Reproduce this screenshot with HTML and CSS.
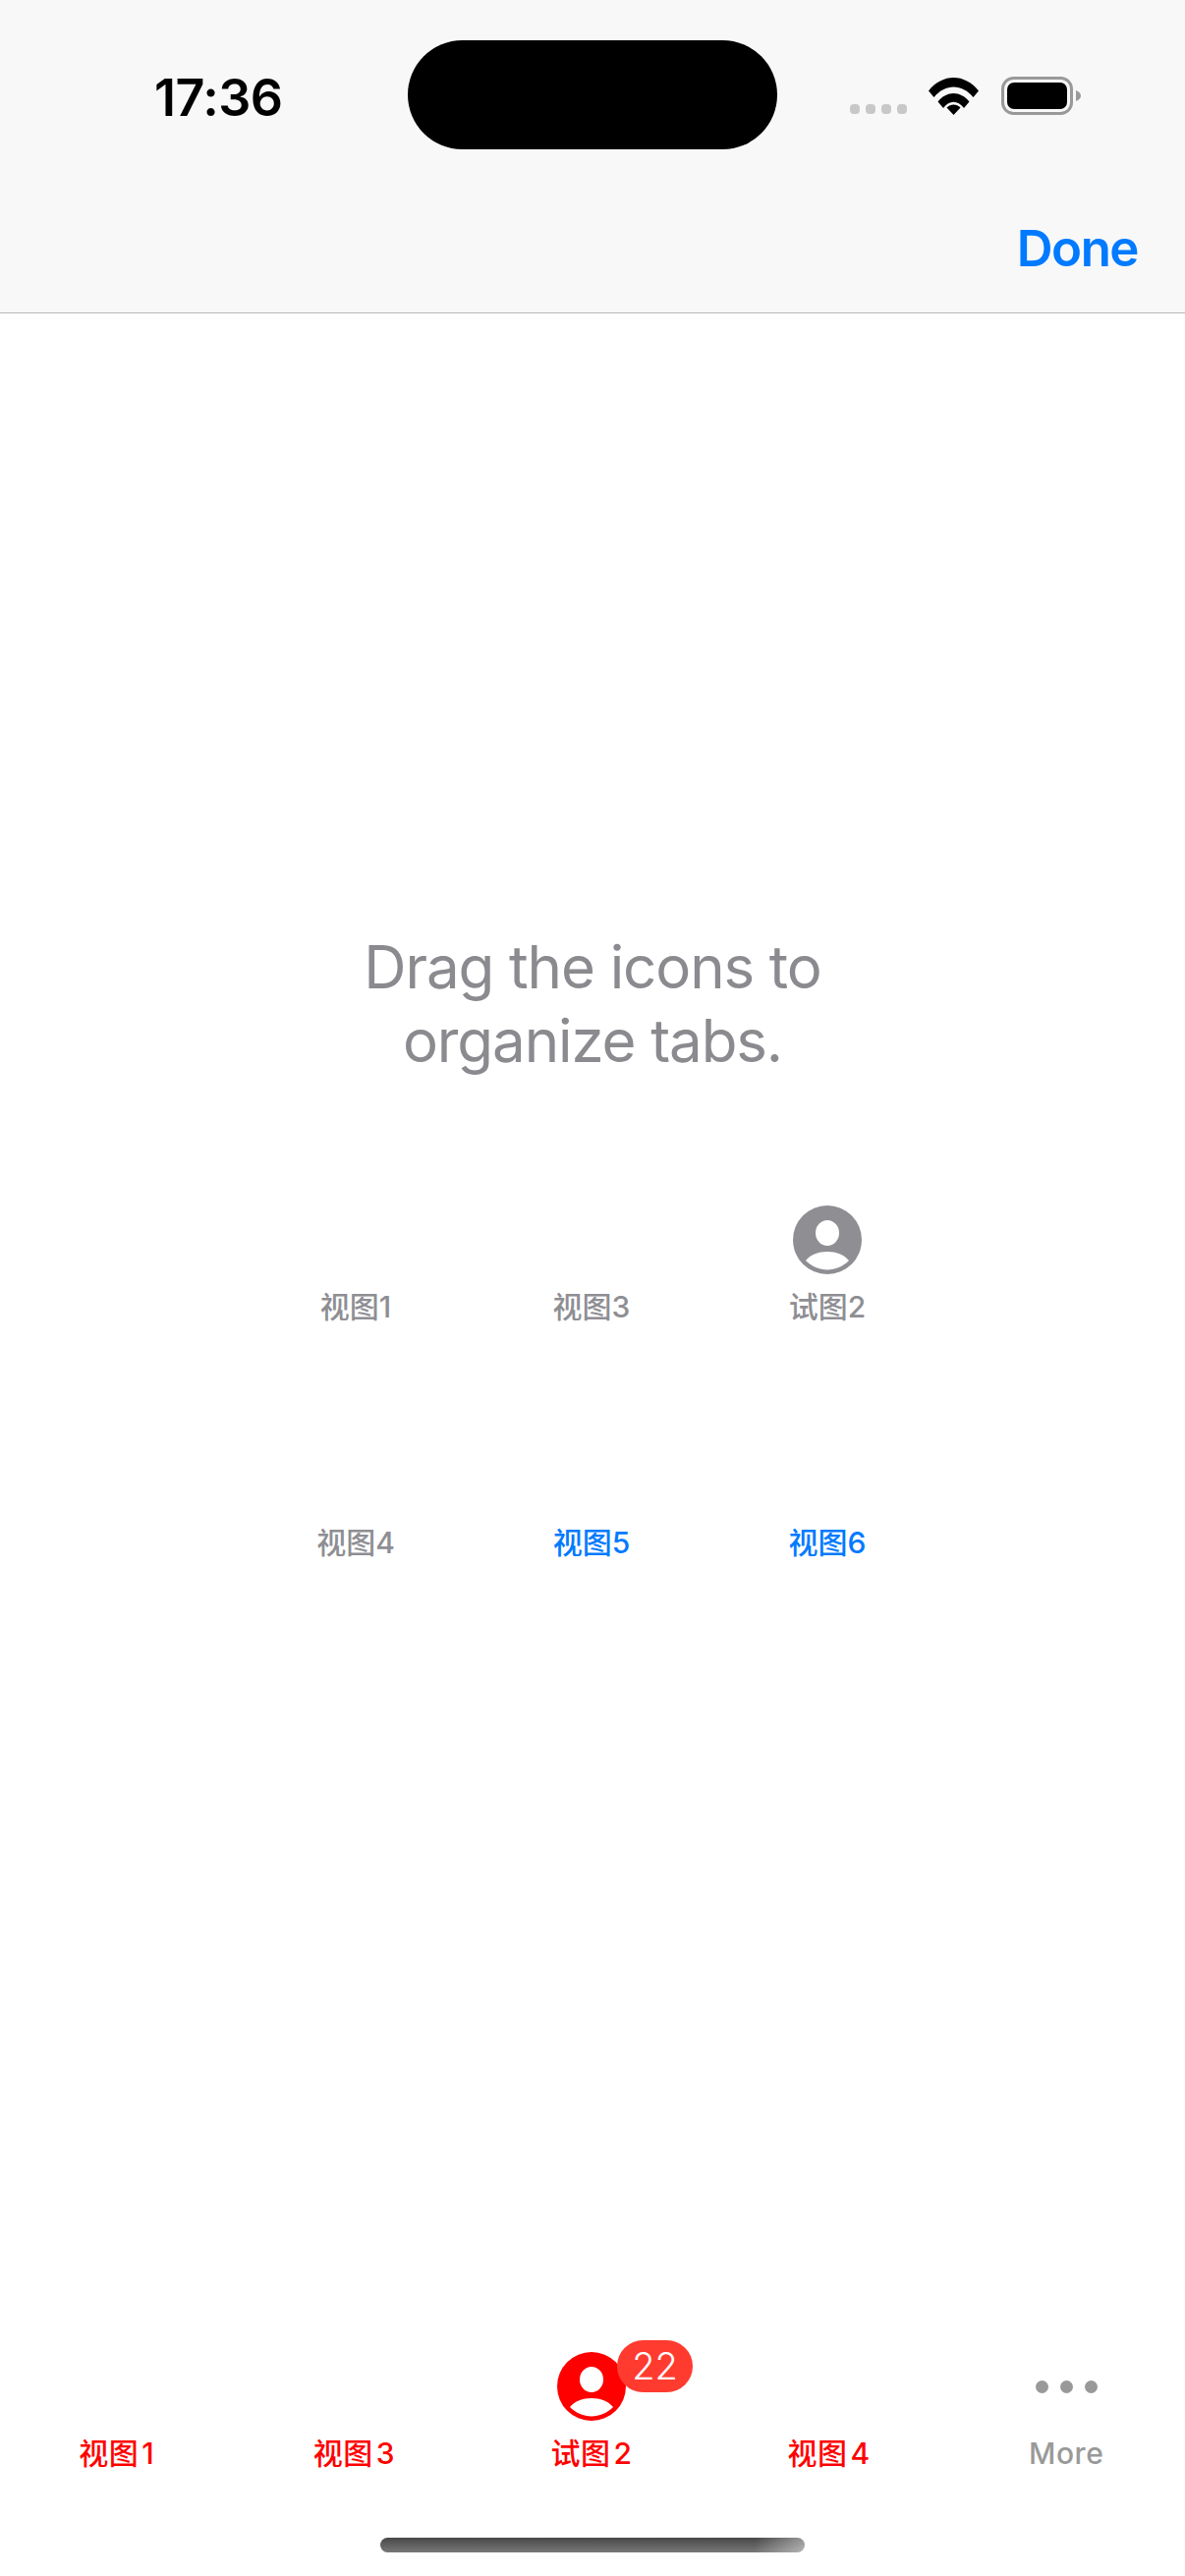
FILE: index.html
```html
<!DOCTYPE html>
<html lang="zh">
<head>
  <meta charset="UTF-8">
  <meta name="viewport" content="width=device-width, initial-scale=1.0">
  <title>Configure</title>
  <link rel="stylesheet" href="styles.css">
</head>
<body>
  <header class="top-bar">
    <div class="status-bar">
      <span class="time">17:36</span>
      <div class="island"></div>
      <div class="status-icons">
        <div class="signal"><i></i><i></i><i></i><i></i></div>
        <svg class="wifi" viewBox="0 0 51 38" fill="none">
          <path d="M0 13.5 C14 -4.5 37 -4.5 51 13.5 L45.5 20 C34 6 17 6 5.5 20 Z" fill="#000"/>
          <path d="M9.5 24.5 C18.5 13 32.5 13 41.5 24.5 L36 31 C29.5 22.5 21.5 22.5 15 31 Z" fill="#000"/>
          <path d="M18.5 30.5 C22.5 26.5 28.5 26.5 32.5 30.5 L25.5 38 Z" fill="#000"/>
        </svg>
        <svg class="battery" viewBox="0 0 81 39" fill="none">
          <rect x="1.5" y="1.5" width="70" height="36" rx="11" stroke="#999" stroke-width="3"/>
          <rect x="6" y="6" width="61" height="27" rx="7" fill="#000"/>
          <path d="M76 14 C79 15 81 17 81 19.5 C81 22 79 24 76 25 Z" fill="#999"/>
        </svg>
      </div>
    </div>
    <div class="nav-bar">
      <a class="done" href="#">Done</a>
    </div>
  </header>

  <main class="content">
    <h2 class="hint">Drag the icons to<br>organize tabs.</h2>
    <div class="tab-grid">
      <div class="grid-item"><span class="label">视图1</span></div>
      <div class="grid-item"><span class="label">视图3</span></div>
      <div class="grid-item">
        <svg class="avatar" viewBox="0 0 70 70">
          <use href="#person"></use>
        </svg>
        <span class="label">试图2</span>
      </div>
      <div class="grid-item"><span class="label">视图4</span></div>
      <div class="grid-item active"><span class="label">视图5</span></div>
      <div class="grid-item active"><span class="label">视图6</span></div>
    </div>
  </main>

  <nav class="tab-bar">
    <div class="tab"><span class="label">视图&#8202;1</span></div>
    <div class="tab"><span class="label">视图&#8202;3</span></div>
    <div class="tab">
      <div class="tab-icon">
        <svg class="avatar" viewBox="0 0 70 70">
          <use href="#person"></use>
        </svg>
        <span class="badge">22</span>
      </div>
      <span class="label">试图&#8202;2</span>
    </div>
    <div class="tab"><span class="label">视图&#8202;4</span></div>
    <div class="tab more">
      <div class="dots"><i></i><i></i><i></i></div>
      <span class="label">More</span>
    </div>
  </nav>
  <div class="home-area"><div class="home-indicator"></div></div>

  <svg class="defs" width="0" height="0">
    <defs>
      <g id="person">
        <path fill="currentColor" fill-rule="evenodd" d="M35 0a35 35 0 1 0 0 70a35 35 0 1 0 0-70Z M35 15a12 13 0 1 0 0 26a12 13 0 1 0 0-26Z M35 47C26 47 18 50 13 56C19 62 27 65.5 35 65.5S51 62 57 56C52 50 44 47 35 47Z"/>
      </g>
    </defs>
  </svg>
</body>
</html>
```

FILE: styles.css
```css
* {
  box-sizing: border-box;
}

body {
  margin: 0;
  height: 2622px;
  display: flex;
  flex-direction: column;
  background: #fff;
  font-family: Inter, "Noto Sans CJK SC", sans-serif;
  overflow: hidden;
}

.top-bar {
  height: 319px;
  background: #f8f8f8;
  border-bottom: 1px solid #b8b8b8;
}

.status-bar {
  height: 193px;
  padding-top: 41px;
  display: flex;
  align-items: flex-start;
}

.time {
  width: 415px;
  padding: 28px 0 0 157px;
  font-size: 52px;
  line-height: 62px;
  font-weight: 600;
  letter-spacing: -0.5px;
  color: #000;
}

.island {
  width: 376px;
  height: 111px;
  border-radius: 56px;
  background: #000;
}

.status-icons {
  display: flex;
  align-items: flex-end;
  padding: 37px 0 0 74px;
}

.signal {
  display: flex;
  gap: 6px;
  margin-right: 22px;
  margin-bottom: 1px;
}

.signal i {
  width: 10px;
  height: 10px;
  border-radius: 4px;
  background: #c8c8c8;
}

.wifi {
  width: 51px;
  height: 38px;
  margin-right: 23px;
}

.battery {
  width: 81px;
  height: 39px;
}

.nav-bar {
  display: flex;
  justify-content: flex-end;
  padding: 29px 48px 0 0;
}

.done {
  font-size: 51px;
  line-height: 62px;
  font-weight: 600;
  letter-spacing: -1.5px;
  color: #007aff;
  text-decoration: none;
}

.content {
  flex: 1;
  padding-top: 628px;
}

.hint {
  margin: 0;
  font-size: 60px;
  line-height: 75px;
  font-weight: 400;
  letter-spacing: -1.1px;
  text-align: center;
  color: #8a8a8f;
}

.tab-grid {
  width: 720px;
  margin-left: 242px;
  padding-top: 130px;
  display: grid;
  grid-template-columns: repeat(3, 240px);
  grid-auto-rows: 240px;
}

.grid-item {
  display: flex;
  flex-direction: column;
  align-items: center;
  padding-top: 70px;
  color: #8e8e93;
}

.grid-item:has(.avatar) {
  padding-top: 0;
}

.grid-item .avatar {
  width: 70px;
  height: 70px;
}

.grid-item .label {
  margin-top: 15px;
}

.grid-item.active {
  color: #007aff;
}

.label {
  font-size: 30px;
  line-height: 36px;
  font-weight: 500;
  white-space: nowrap;
}

.tab-bar {
  height: 143px;
  margin-left: -2px;
  display: grid;
  grid-template-columns: repeat(5, 1fr);
}

.tab {
  display: flex;
  flex-direction: column;
  align-items: center;
  justify-content: flex-end;
  color: #f00;
  padding-bottom: 4px;
}

.tab .label {
  letter-spacing: 0.5px;
}

.tab.more {
  color: #999;
}

.tab-icon {
  position: relative;
  width: 70px;
  height: 70px;
  margin-bottom: 15px;
}

.tab-icon .avatar {
  display: block;
  width: 70px;
  height: 70px;
}

.badge {
  position: absolute;
  top: -12px;
  left: 61px;
  min-width: 77px;
  height: 53px;
  border-radius: 27px;
  background: #ff3b30;
  color: #fff;
  font-size: 38px;
  line-height: 53px;
  font-weight: 300;
  text-align: center;
}

.dots {
  display: flex;
  gap: 12px;
  margin-bottom: 43px;
}

.dots i {
  width: 13px;
  height: 13px;
  border-radius: 50%;
  background: #999;
}

.home-area {
  height: 103px;
  padding-top: 64px;
  display: flex;
  justify-content: center;
}

.home-indicator {
  width: 432px;
  height: 15px;
  border-radius: 8px;
  background:
    linear-gradient(100deg, rgba(255, 255, 255, 0) 88%, rgba(255, 255, 255, 0.45) 100%),
    linear-gradient(#484848, #777);
}

.defs {
  position: absolute;
}
```
